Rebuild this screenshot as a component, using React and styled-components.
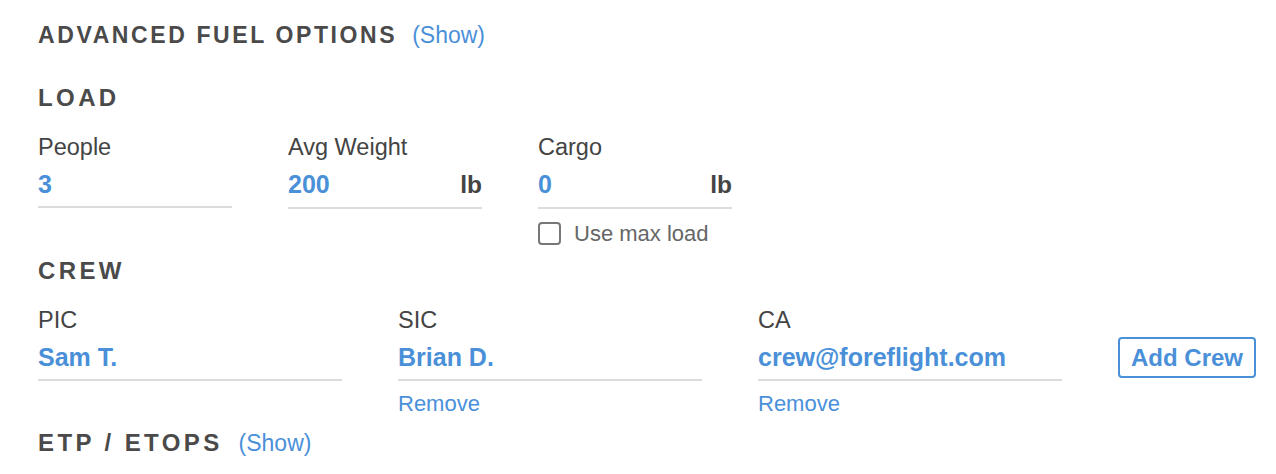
import React from "react";
import styled, { createGlobalStyle } from "styled-components";

const GlobalStyle = createGlobalStyle`
  body {
    margin: 0;
    background: #fff;
    font-family: "Liberation Sans", Arial, Helvetica, sans-serif;
  }
`;

const BLUE = "#4a90d9";

const Page = styled.div`
  padding: 21px 0 0 38px;
`;

const Title = styled.h2`
  margin: ${(p) => p.$top || 0}px 0 0;
  font-size: ${(p) => p.$size || 24}px;
  line-height: 28px;
  font-weight: 700;
  letter-spacing: ${(p) => p.$spacing || 3.4}px;
  color: #4a4a4a;
`;

const Toggle = styled.span`
  margin-left: ${(p) => p.$gap || 14}px;
  font-size: 23px;
  font-weight: 400;
  letter-spacing: 0;
  color: ${BLUE};
  cursor: pointer;
`;

const FieldRow = styled.div`
  display: flex;
  align-items: flex-start;
  gap: 56px;
  margin-top: 21px;
`;

const Field = styled.div`
  width: ${(p) => p.$width}px;
  flex-shrink: 0;
  display: flex;
  flex-direction: column;
`;

const Label = styled.div`
  font-size: 23.5px;
  line-height: 28px;
  color: #444;
`;

const ValueBox = styled.div`
  margin-top: 8px;
  padding-bottom: 7px;
  border-bottom: 2px solid #dcdcdc;
  display: flex;
  justify-content: space-between;
  align-items: baseline;
  font-size: 25px;
  line-height: 30px;
  font-weight: 700;
`;

const Value = styled.span`
  color: ${BLUE};
`;

const Unit = styled.span`
  font-size: 24.5px;
  color: #444;
`;

const CheckRow = styled.label`
  display: flex;
  align-items: center;
  gap: 13px;
  margin-top: 13px;
  font-size: 22px;
  line-height: 23px;
  color: #666;
`;

const Box = styled.span`
  width: 23px;
  height: 23px;
  box-sizing: border-box;
  border: 2px solid #777;
  border-radius: 4px;
`;

const RemoveLink = styled.span`
  margin-top: 10px;
  font-size: 22px;
  line-height: 26px;
  color: ${BLUE};
  cursor: pointer;
`;

const AddButton = styled.button`
  flex-shrink: 0;
  margin-top: 31px;
  width: 138px;
  height: 41px;
  padding: 0;
  background: #fff;
  border: 2px solid ${BLUE};
  border-radius: 4px;
  font-family: inherit;
  font-size: 24px;
  font-weight: 700;
  color: ${BLUE};
`;

const loadFields = [
  { label: "People", value: "3" },
  { label: "Avg Weight", value: "200", unit: "lb" },
  { label: "Cargo", value: "0", unit: "lb", maxLoad: true },
];

const crew = [
  { label: "PIC", value: "Sam T." },
  { label: "SIC", value: "Brian D.", removable: true },
  { label: "CA", value: "crew@foreflight.com", removable: true },
];

export default function App() {
  return (
    <Page>
      <GlobalStyle />
      <Title $size={23} $spacing={2.6}>
        ADVANCED FUEL OPTIONS<Toggle $gap={15}>(Show)</Toggle>
      </Title>

      <Title $top={35}>LOAD</Title>
      <FieldRow>
        {loadFields.map((f) => (
          <Field key={f.label} $width={194}>
            <Label>{f.label}</Label>
            <ValueBox>
              <Value>{f.value}</Value>
              {f.unit && <Unit>{f.unit}</Unit>}
            </ValueBox>
            {f.maxLoad && (
              <CheckRow>
                <Box />
                Use max load
              </CheckRow>
            )}
          </Field>
        ))}
      </FieldRow>

      <Title $top={12}>CREW</Title>
      <FieldRow>
        {crew.map((c) => (
          <Field key={c.label} $width={304}>
            <Label>{c.label}</Label>
            <ValueBox>
              <Value>{c.value}</Value>
            </ValueBox>
            {c.removable && <RemoveLink>Remove</RemoveLink>}
          </Field>
        ))}
        <AddButton>Add Crew</AddButton>
      </FieldRow>

      <Title $top={12}>
        ETP / ETOPS<Toggle $gap={16}>(Show)</Toggle>
      </Title>
    </Page>
  );
}
